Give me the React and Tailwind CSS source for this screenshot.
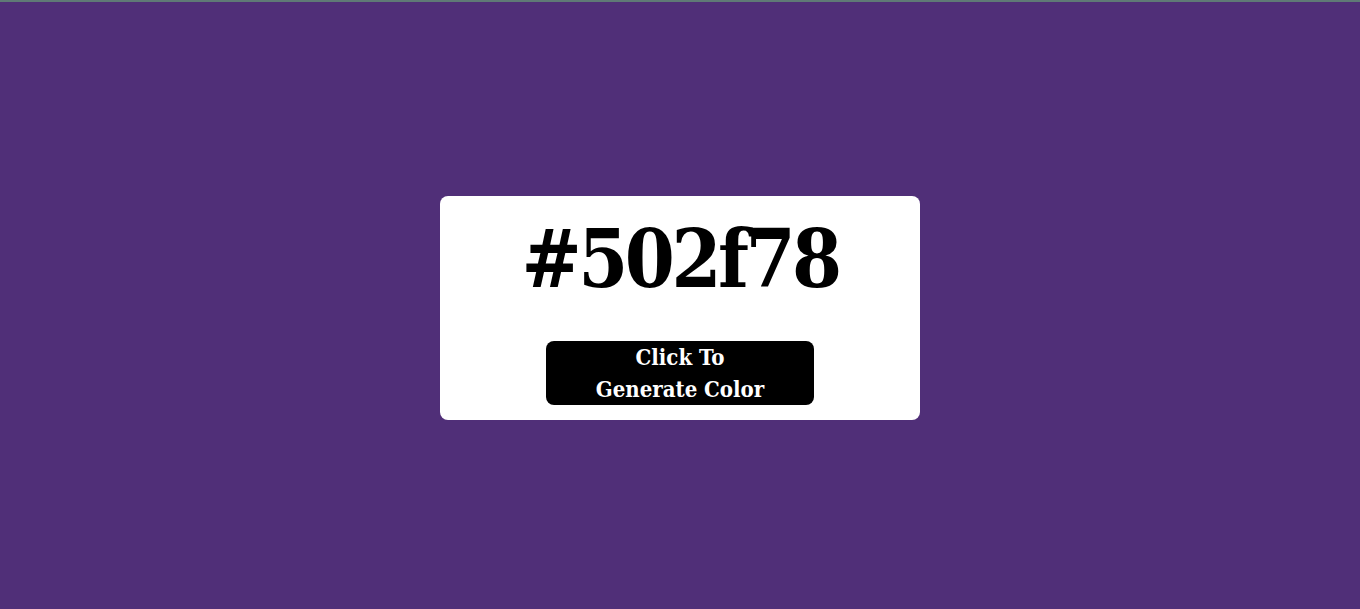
export default function App() {
  return (
    <div className="h-screen min-h-[609px] bg-[#502f78] border-t-2 border-[#5f7a76] pt-[5px] flex items-center justify-center">
      <div className="w-[480px] h-[224px] bg-white rounded-lg flex flex-col items-center pt-[23px] pb-[15px]">
        <h1
          className="text-[80px] font-bold leading-none tracking-[-3.5px] text-black"
          style={{ fontFamily: '"DejaVu Serif", serif', fontStretch: 'condensed' }}
        >
          #502f78
        </h1>
        <button
          className="mt-auto w-[268px] h-[64px] bg-black text-white rounded-lg text-[22px] leading-[32px] font-bold"
          style={{ fontFamily: '"DejaVu Serif", serif', fontStretch: 'condensed' }}
        >
          Click To
          <br />
          Generate Color
        </button>
      </div>
    </div>
  );
}
